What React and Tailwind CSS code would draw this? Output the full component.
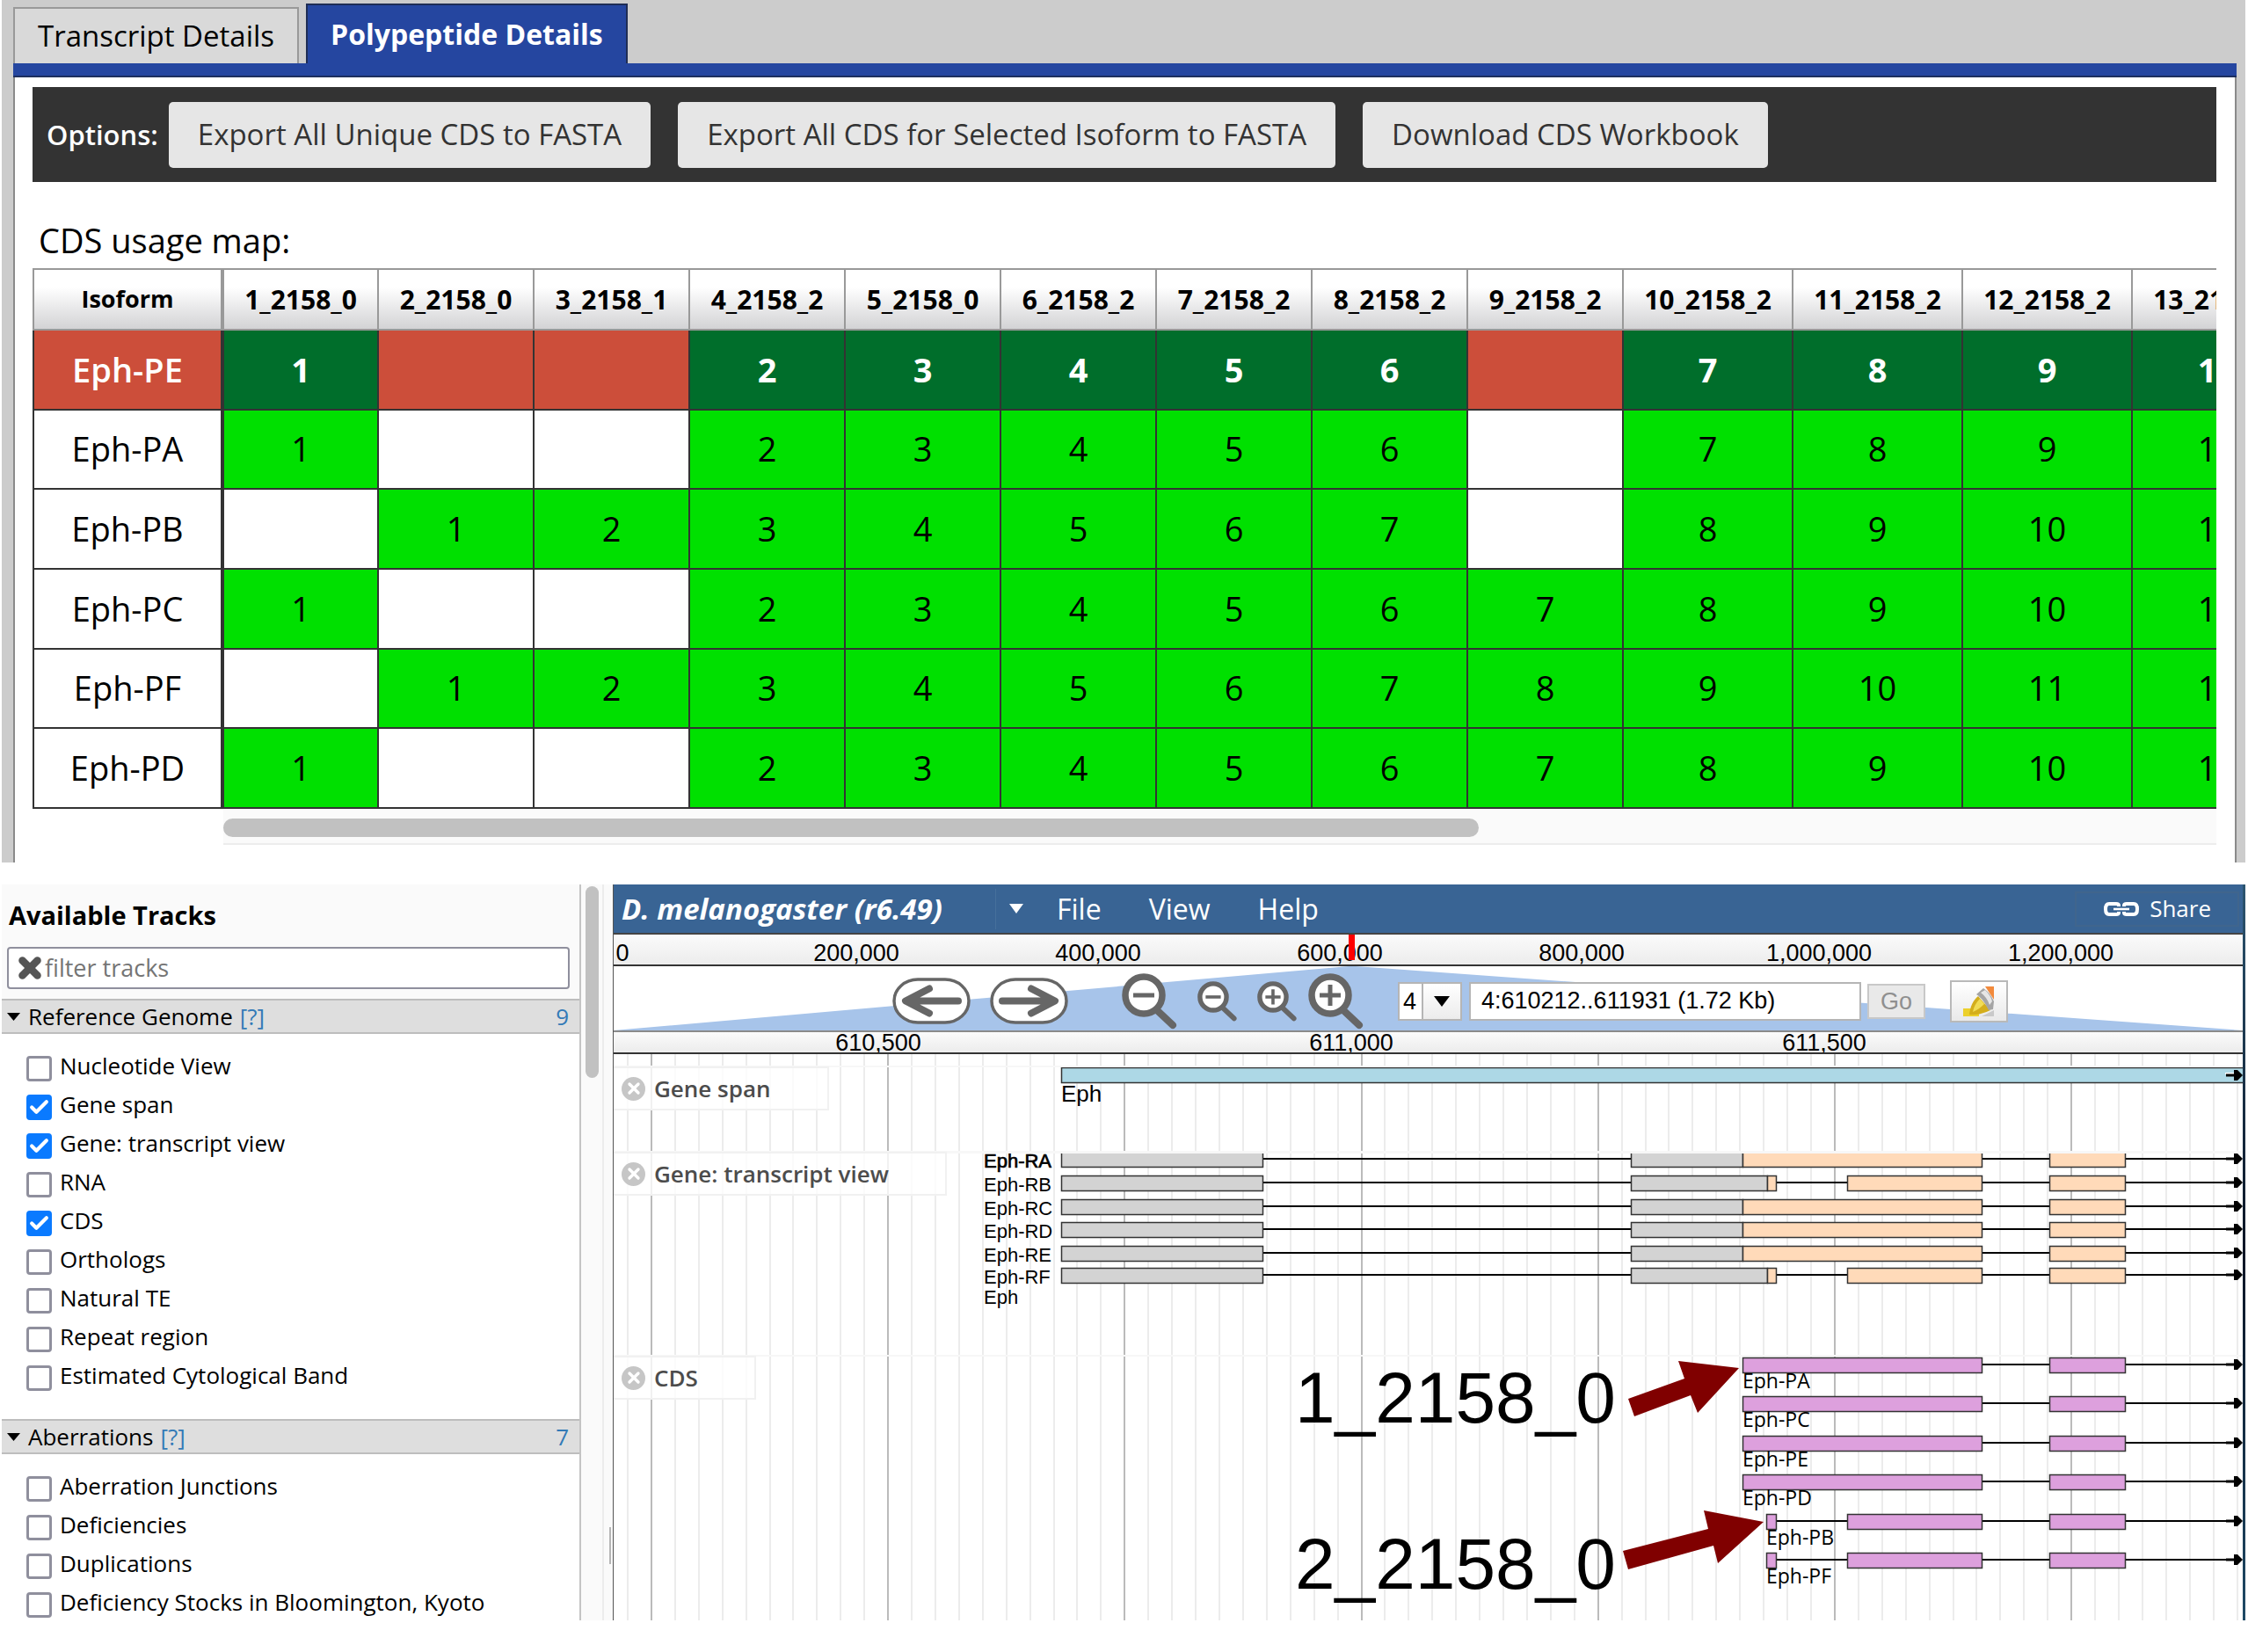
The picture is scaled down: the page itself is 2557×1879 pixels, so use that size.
import { Check, X } from "lucide-react";

// CDS usage map
const columns = [
  "1_2158_0",
  "2_2158_0",
  "3_2158_1",
  "4_2158_2",
  "5_2158_0",
  "6_2158_2",
  "7_2158_2",
  "8_2158_2",
  "9_2158_2",
  "10_2158_2",
  "11_2158_2",
  "12_2158_2",
  "13_2158_2",
];

const isoforms = [
  { name: "Eph-PE", selected: true, cds: [1, 0, 0, 2, 3, 4, 5, 6, 0, 7, 8, 9, 10] },
  { name: "Eph-PA", cds: [1, 0, 0, 2, 3, 4, 5, 6, 0, 7, 8, 9, 10] },
  { name: "Eph-PB", cds: [0, 1, 2, 3, 4, 5, 6, 7, 0, 8, 9, 10, 11] },
  { name: "Eph-PC", cds: [1, 0, 0, 2, 3, 4, 5, 6, 7, 8, 9, 10, 11] },
  { name: "Eph-PF", cds: [0, 1, 2, 3, 4, 5, 6, 7, 8, 9, 10, 11, 12] },
  { name: "Eph-PD", cds: [1, 0, 0, 2, 3, 4, 5, 6, 7, 8, 9, 10, 11] },
];

// Sidebar
const trackGroups = [
  {
    title: "Reference Genome",
    count: 9,
    tracks: [
      ["Nucleotide View", false],
      ["Gene span", true],
      ["Gene: transcript view", true],
      ["RNA", false],
      ["CDS", true],
      ["Orthologs", false],
      ["Natural TE", false],
      ["Repeat region", false],
      ["Estimated Cytological Band", false],
    ],
  },
  {
    title: "Aberrations",
    count: 7,
    tracks: [
      ["Aberration Junctions", false],
      ["Deficiencies", false],
      ["Duplications", false],
      ["Deficiency Stocks in Bloomington, Kyoto", false],
    ],
  },
];

// Ruler labels
const overviewTicks = [
  ["200,000", 276],
  ["400,000", 551],
  ["600,000", 826],
  ["800,000", 1101],
  ["1,000,000", 1371],
  ["1,200,000", 1646],
];

// Genome features, x in canvas pixels
const GREY = "#d3d3d3";
const PEACH = "#ffdab9";
const PLUM = "#dda0dd";

const longForm = [
  [509, 229, GREY],
  [1157, 127, GREY],
  [1284, 272, PEACH],
  [1633, 86, PEACH],
];
const shortForm = [
  [509, 229, GREY],
  [1157, 155, GREY],
  [1312, 10, PEACH],
  [1403, 153, PEACH],
  [1633, 86, PEACH],
];
const transcripts = [
  { name: "Eph-RA", y: 111, boxes: longForm },
  { name: "Eph-RB", y: 138, boxes: shortForm },
  { name: "Eph-RC", y: 165, boxes: longForm },
  { name: "Eph-RD", y: 191, boxes: longForm },
  { name: "Eph-RE", y: 218, boxes: longForm },
  { name: "Eph-RF", y: 243, boxes: shortForm },
];

const longCds = [
  [1284, 272, PLUM],
  [1633, 86, PLUM],
];
const shortCds = [
  [1311, 11, PLUM],
  [1403, 153, PLUM],
  [1633, 86, PLUM],
];
const cdsRows = [
  { name: "Eph-PA", y: 345, boxes: longCds },
  { name: "Eph-PC", y: 389, boxes: longCds },
  { name: "Eph-PE", y: 434, boxes: longCds },
  { name: "Eph-PD", y: 478, boxes: longCds },
  { name: "Eph-PB", y: 523, boxes: shortCds },
  { name: "Eph-PF", y: 567, boxes: shortCds },
];

const OptionButton = ({ children }) => (
  <button
    type="button"
    className="h-[75px] rounded-[5px] bg-[#e6e6e6] px-[33px] text-[33px] whitespace-nowrap text-[#333]"
  >
    {children}
  </button>
);

const UsageMap = () => (
  <div>
    <div className="overflow-x-auto overflow-y-hidden [scrollbar-width:none]">
      <table className="h-[615px] w-[2582px] table-fixed border-collapse text-center">
        <thead>
          <tr className="h-[69px] bg-linear-to-b from-white from-30% to-[#d2d2d4] text-[30px] font-bold">
            <th className="w-[215px] border-2 border-r-4 border-[#999] text-[27px]">
              Isoform
            </th>
            {columns.map((c, i) => (
              <th
                key={c}
                className={
                  i < 9
                    ? "w-[177px] border-2 border-[#999] p-0"
                    : "border-2 border-[#999] p-0"
                }
              >
                {c}
              </th>
            ))}
          </tr>
        </thead>
        <tbody className="text-[38px] font-medium">
          {isoforms.map(({ name, selected, cds }) => (
            <tr key={name}>
              <th
                scope="row"
                className={
                  selected
                    ? "border-2 border-r-4 border-[#333] bg-[#cc4e3a] font-semibold text-white"
                    : "border-2 border-r-4 border-[#333] bg-white font-medium"
                }
              >
                {name}
              </th>
              {cds.map((n, i) => {
                let cell = "border-2 border-[#333] p-0";
                if (selected) {
                  cell += n ? " bg-[#006e2b] font-bold text-white" : " bg-[#cc4e3a]";
                } else if (n) {
                  cell += " bg-[#00e000]";
                }
                return (
                  <td key={i} className={cell}>
                    {n || ""}
                  </td>
                );
              })}
            </tr>
          ))}
        </tbody>
      </table>
    </div>
    <div className="ml-[217px] h-[41px] border-b-2 border-[#ededed] bg-[#fafafa] pt-[11px]">
      <div className="h-[21px] w-[63%] rounded-full bg-[#c1c1c1]" />
    </div>
  </div>
);

const DetailsPanel = () => (
  <section className="bg-[#ccc] pr-[10px] pl-[13px]">
    <div className="flex h-[72px] items-end gap-2">
      <button
        type="button"
        className="h-[64px] border-2 border-b-0 border-[#999] bg-[#d9d9d9] px-[26px] text-[33px] font-medium whitespace-nowrap"
      >
        Transcript Details
      </button>
      <button
        type="button"
        className="h-[68px] border-2 border-b-0 border-[#1f2d55] bg-[#2546a0] px-[26px] text-[32px] font-bold whitespace-nowrap text-white"
      >
        Polypeptide Details
      </button>
    </div>
    <div className="h-4 border-b-2 border-[#1d2f5f] bg-[#2546a0]" />
    <div className="border-x-2 border-[#8a8a8a] bg-white pt-[11px] pr-[21px] pb-[20px] pl-5">
      <div className="flex h-[108px] items-center bg-[#333] pl-4">
        <span className="mr-3 text-[31px] font-semibold text-white">Options:</span>
        <div className="flex gap-[31px]">
          <OptionButton>Export All Unique CDS to FASTA</OptionButton>
          <OptionButton>Export All CDS for Selected Isoform to FASTA</OptionButton>
          <OptionButton>Download CDS Workbook</OptionButton>
        </div>
      </div>
      <h2 className="mt-[38px] mb-1 pl-[7px] text-[38px] leading-[56px] font-medium">
        CDS usage map:
      </h2>
      <UsageMap />
    </div>
  </section>
);

const TrackGroup = ({ title, count, tracks }) => (
  <div>
    <div className="flex h-[40px] items-center border-y-2 border-[#bdbdbd] bg-[#dedede] pr-3 pl-[6px] text-[26px] font-medium">
      <svg className="mr-[9px] h-[9px] w-[15px]" viewBox="0 0 15 9">
        <path d="M0 0h15L7.500 9z" />
      </svg>
      <span>{title}</span>
      <a href="#help" className="ml-2 text-[#337ab7]">
        [?]
      </a>
      <span className="ml-auto text-[#337ab7]">{count}</span>
    </div>
    <ul className="bg-white pt-[17px] pb-[25px]">
      {tracks.map(([name, on]) => (
        <li key={name}>
          <label className="flex h-[44px] items-center gap-[9px] pl-7 text-[26px] font-medium whitespace-nowrap">
            <span className="grid h-[29px] w-[29px]">
              <input
                type="checkbox"
                defaultChecked={on}
                className="peer col-start-1 row-start-1 appearance-none rounded-[4px] border-3 border-[#8f8f9d] bg-white checked:border-[#0a7aff] checked:bg-[#0a7aff]"
              />
              <Check
                size={25}
                strokeWidth={4}
                className="pointer-events-none invisible col-start-1 row-start-1 place-self-center text-white peer-checked:visible"
              />
            </span>
            <span className="pb-1.5">{name}</span>
          </label>
        </li>
      ))}
    </ul>
  </div>
);

const Sidebar = () => (
  <aside className="flex w-[695px] shrink-0 overflow-hidden bg-[#fafafa]">
    <div className="w-[659px] border-r-2 border-[#c4c4c4]">
      <h2 className="pt-[14px] pl-2 text-[29px] leading-[42px] font-bold">
        Available Tracks
      </h2>
      <div className="mt-[15px] mr-[11px] mb-[11px] ml-[6px] flex h-[48px] items-center rounded-[4px] border-2 border-[#8f8f9d] bg-white pl-[7px]">
        <X size={34} strokeWidth={6} className="text-[#555]" />
        <input
          type="text"
          aria-label="filter tracks"
          placeholder="filter tracks"
          className="flex-1 text-[27px] outline-none placeholder:text-[#757575]"
        />
      </div>
      {trackGroups.map((g) => (
        <TrackGroup key={g.title} {...g} />
      ))}
    </div>
    <div className="w-[26px] border-r-2 border-[#ececec] pt-[2px] pl-[5px]">
      <div className="h-[218px] w-[15px] rounded-full bg-[#c1c1c1]" />
    </div>
    <div className="flex flex-1 items-end justify-end pr-[2px] pb-[64px]">
      <div className="h-[42px] w-[2px] bg-[#b5b5b5]" />
    </div>
  </aside>
);

const PanIcon = ({ flip }) => (
  <svg width="89" height="53" viewBox="0 0 89 53" fill="none" stroke="#666">
    <rect x="2" y="2" width="85" height="49" rx="27" fill="#fff" strokeWidth="3.500" />
    <path
      d={flip ? "M14 26.500H73M47 12.500L74 26.500L47 40.500" : "M75 26.500H16M42 12.500L15 26.500L42 40.500"}
      strokeWidth="8"
      strokeLinecap="round"
      strokeLinejoin="round"
    />
  </svg>
);

const ZoomIcon = ({ big, plus }) => (
  <svg
    width={big ? 64 : 46}
    height={big ? 64 : 46}
    viewBox="0 0 64 64"
    fill="none"
    stroke="#666"
  >
    <path d="M41 43L58 59" strokeWidth="8" strokeLinecap="round" />
    <circle cx="25" cy="25" r="21" fill="#fff" strokeWidth="7.500" />
    <path d={plus ? "M13 25H37M25 13V37" : "M13 25H37"} strokeWidth="5" />
  </svg>
);

const HighlighterIcon = () => (
  <svg width="38" height="36" viewBox="0 0 38 36">
    <path d="M1 26h18v9H1z" fill="#ecd02c" />
    <path d="M22 35l14-7v7z" fill="#c9c9c9" />
    <path d="M8 33C9 24 12 17 18 12l14 16c-7 3-14 6-24 5z" fill="#d4ae1c" />
    <path d="M12 30c1-6 4-11 8-15l5 6c-4 4-8 7-13 9z" fill="#f1dc55" />
    <path d="M26 1h10v15z" fill="#f28a3c" />
    <path d="M16 10l8-7c5 3 9 8 12 15l-1 9-5 1C26 20 22 14 16 10z" fill="#a5a5a5" />
    <path d="M21 8l5-3c4 4 7 8 8 13l-3 4c-2-6-5-10-10-14z" fill="#e6e6e6" />
  </svg>
);

const LinkIcon = () => (
  <svg width="40" height="18" viewBox="0 0 40 18" fill="none" stroke="#fff" strokeWidth="4">
    <path d="M17 6V5q0-2-3-2H6Q2 3 2 9t4 6h8q3 0 3-2v-1" />
    <path d="M23 6V5q0-2 3-2h8q4 0 4 6t-4 6h-8q-3 0-3-2v-1" />
    <path d="M11 9h18" strokeWidth="2.500" />
  </svg>
);

const MenuBar = () => (
  <nav className="flex h-[57px] items-center border-b-2 border-[#444] bg-[#396494] pl-[9px] text-[32px] font-medium text-white">
    <span className="w-[426px] border-r border-[#46709b] text-[33px] leading-[46px] font-bold whitespace-nowrap italic">
      D. melanogaster (r6.49)
    </span>
    <button type="button" aria-label="Open menu" className="mr-[38px] ml-[15px]">
      <svg width="16" height="11" viewBox="0 0 16 11">
        <path d="M0 0h16L8 11z" fill="#fff" />
      </svg>
    </button>
    <div className="flex gap-[54px]">
      <button type="button">File</button>
      <button type="button">View</button>
      <button type="button">Help</button>
    </div>
    <button
      type="button"
      className="mr-1 ml-auto flex h-[40px] items-center gap-3 border-2 border-[#40658d] pr-[30px] pl-[31px] text-[26px]"
    >
      <LinkIcon />
      Share
    </button>
  </nav>
);

const Navigator = () => (
  <div className="relative h-[75px] border-b-2 border-[#8a8a8a] bg-white">
    <svg
      className="absolute inset-0 h-full w-full"
      viewBox="0 0 1853 73"
      preserveAspectRatio="none"
    >
      <path d="M0 73L836 0h8L1853 73z" fill="#a7c4ea" />
    </svg>
    <div className="relative flex h-full items-center pt-[6px] pl-[317px] font-['Liberation_Sans',Arial,sans-serif] text-[27px]">
      <div className="flex gap-[22px]">
        <button type="button" aria-label="Pan left">
          <PanIcon />
        </button>
        <button type="button" aria-label="Pan right">
          <PanIcon flip />
        </button>
      </div>
      <div className="ml-[61px] flex items-center gap-[22px]">
        <button type="button" aria-label="Zoom out far">
          <ZoomIcon big />
        </button>
        <button type="button" aria-label="Zoom out">
          <ZoomIcon />
        </button>
        <button type="button" aria-label="Zoom in">
          <ZoomIcon plus />
        </button>
        <button type="button" aria-label="Zoom in far" className="-ml-[10px]">
          <ZoomIcon big plus />
        </button>
      </div>
      <div className="ml-[38px] grid h-[44px] w-[73px] border-2 border-[#b5b5b5] bg-white">
        <select
          aria-label="Chromosome"
          className="col-start-1 row-start-1 appearance-none pl-1"
        >
          <option>4</option>
        </select>
        <span className="pointer-events-none col-start-1 row-start-1 grid w-[44px] place-items-center justify-self-end border-l-2 border-[#b5b5b5] bg-linear-to-b from-white to-[#ececec]">
          <svg width="18" height="12" viewBox="0 0 18 12">
            <path d="M0 0h18L9 12z" />
          </svg>
        </span>
      </div>
      <input
        type="text"
        aria-label="Location"
        defaultValue="4:610212..611931 (1.72 Kb)"
        className="ml-2 h-[44px] w-[446px] border-2 border-[#b5b5b5] bg-white px-3"
      />
      <button
        type="button"
        className="ml-[7px] h-[40px] w-[66px] border-2 border-[#c8c8c8] bg-[#e9e9e9] leading-[30px] text-[#8f8f8f]"
      >
        Go
      </button>
      <button
        type="button"
        aria-label="Highlight region"
        className="ml-7 grid h-[48px] w-[66px] place-items-center border-2 border-[#b9b9b9] bg-linear-to-b from-white to-[#e9e9e9]"
      >
        <HighlighterIcon />
      </button>
    </div>
  </div>
);

const Overview = () => (
  <div className="h-[36px] border-b-2 border-[#333] bg-linear-to-b from-[#fbfbfb] to-[#ececec]">
    <svg
      className="h-full w-full font-['Liberation_Sans',Arial,sans-serif] text-[27px]"
      textAnchor="middle"
    >
      <text x="10" y="30">
        0
      </text>
      {overviewTicks.map(([label, x]) => (
        <text key={label} x={x} y="30">
          {label}
        </text>
      ))}
      <rect x="836" y="0" width="7" height="29" fill="red" />
    </svg>
  </div>
);

const DetailRuler = () => (
  <div className="h-[25px] border-b-2 border-[#333] bg-linear-to-b from-[#fbfbfb] to-[#ececec]">
    <svg
      className="h-full w-full font-['Liberation_Sans',Arial,sans-serif] text-[27px]"
      textAnchor="middle"
    >
      {["610,500", "611,000", "611,500"].map((t, i) => (
        <text key={t} x={301 + i * 538} y="21">
          {t}
        </text>
      ))}
    </svg>
  </div>
);

const Arrowhead = ({ y }) => (
  <g>
    <path d={`M1833 ${y - 3}h12v2h-12z`} fill="#fff" />
    <path d={`M1834 ${y}h14`} stroke="#000" strokeWidth="3" />
    <path d={`M1843 ${y - 6}h4L1853 ${y}L1847 ${y + 6}h-4z`} />
  </g>
);

const Feature = ({ y, boxes }) => (
  <g>
    <rect x={boxes[0][0]} y={y + 7} width={1836 - boxes[0][0]} height="2" />
    {boxes.map(([x, w, fill]) => (
      <rect
        key={x}
        x={x + 0.5}
        y={y + 0.5}
        width={w}
        height="17"
        fill={fill}
        stroke="#333"
        strokeWidth="1.500"
      />
    ))}
    <Arrowhead y={y + 8} />
  </g>
);

const TrackCanvas = () => (
  <svg className="h-full w-full font-['Liberation_Sans',Arial,sans-serif]">
    {Array.from({ length: 69 }, (_, i) => (
      <rect
        key={i}
        x={Math.round(15 + i * 26.92)}
        y="0"
        width="2"
        height="644"
        fill={i % 10 === 1 ? "#bbb" : "#ececec"}
      />
    ))}

    {/* gene span */}
    <rect x="509.500" y="15.500" width="1350" height="17" fill="#add8e6" stroke="#333" strokeWidth="1.500" />
    <Arrowhead y={24} />
    <text x="509" y="54" className="text-[26px]">
      Eph
    </text>

    {/* transcripts */}
    {transcripts.map((t, i) => (
      <g key={t.name}>
        <Feature {...t} />
        <text
          x="421"
          y={t.y + 18}
          stroke={i === 0 ? "#000" : "none"}
          strokeWidth="0.700"
          className="text-[22px]"
        >
          {t.name}
        </text>
      </g>
    ))}
    <text x="421" y="284" className="text-[22px]">
      Eph
    </text>

    {/* CDS */}
    {cdsRows.map((t) => (
      <g key={t.name}>
        <Feature {...t} />
        <text
          x={t.boxes[0][0]}
          y={t.y + 35}
          className="font-['Open_Sans',sans-serif] text-[23px]"
        >
          {t.name}
        </text>
      </g>
    ))}

    {/* track dividers */}
    <rect x="0" y="13" width="1853" height="2" fill="#f7f7f7" />
    <rect x="0" y="110" width="1853" height="3" fill="#f7f7f7" />
    <rect x="0" y="342" width="1853" height="2" fill="#f7f7f7" />

    {/* annotations */}
    <text x="775" y="419" className="text-[82px]">
      1_2158_0
    </text>
    <text x="775" y="608" className="text-[82px]">
      2_2158_0
    </text>
    <path d="M1280 357L1211 349L1218 369L1154 392L1161 412L1225 388L1233 408z" fill="#800000" />
    <path d="M1308 532L1240 519L1245 540L1148 565L1154 586L1251 559L1256 579z" fill="#800000" />
  </svg>
);

const TrackLabel = ({ children }) => (
  <div className="flex h-[50px] items-center gap-[10px] border-2 border-l-0 border-[#f1f1f1] bg-white/80 pr-[64px] pl-[9px] text-[26px] font-semibold whitespace-nowrap text-[#4c4c4c]">
    <button
      type="button"
      aria-label="Close track"
      className="grid h-[27px] w-[27px] place-items-center rounded-full bg-[#c6c6c6] text-white"
    >
      <X size={20} strokeWidth={4} />
    </button>
    {children}
  </div>
);

const Browser = () => (
  <main className="min-w-0 flex-1 border-l border-[#555]">
    <MenuBar />
    <Overview />
    <Navigator />
    <DetailRuler />
    <div className="relative h-[644px] overflow-hidden bg-white">
      <TrackCanvas />
      <div className="absolute top-[14px] left-0">
        <TrackLabel>Gene span</TrackLabel>
      </div>
      <div className="absolute top-[111px] left-0">
        <TrackLabel>Gene: transcript view</TrackLabel>
      </div>
      <div className="absolute top-[343px] left-0">
        <TrackLabel>CDS</TrackLabel>
      </div>
    </div>
  </main>
);

const App = () => (
  <div className="overflow-hidden bg-white pr-[3px] pb-9 pl-[2px] font-['Open_Sans',sans-serif] text-black">
    <DetailsPanel />
    <div className="mt-[25px] flex h-[837px]">
      <Sidebar />
      <Browser />
      <div className="w-[3px] bg-linear-to-b from-[#2c5570] via-[#0b1526] to-[#1f4a66]" />
    </div>
  </div>
);

export default App;
